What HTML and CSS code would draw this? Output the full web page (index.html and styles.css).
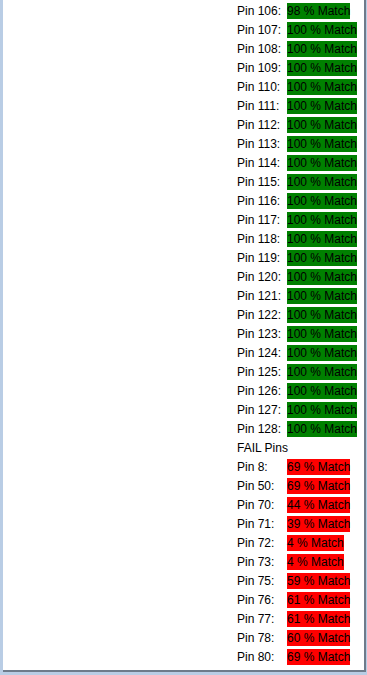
FILE: index.html
```html
<!DOCTYPE html>
<html>
<head>
  <title>Pin Results</title>
  <link rel="stylesheet" href="styles.css">
</head>
<body>
  <div class="panel">
    <div class="results">
      <span class="pin">Pin 106:</span><span><span class="match pass">98 % Match</span></span>
      <span class="pin">Pin 107:</span><span><span class="match pass">100 % Match</span></span>
      <span class="pin">Pin 108:</span><span><span class="match pass">100 % Match</span></span>
      <span class="pin">Pin 109:</span><span><span class="match pass">100 % Match</span></span>
      <span class="pin">Pin 110:</span><span><span class="match pass">100 % Match</span></span>
      <span class="pin">Pin 111:</span><span><span class="match pass">100 % Match</span></span>
      <span class="pin">Pin 112:</span><span><span class="match pass">100 % Match</span></span>
      <span class="pin">Pin 113:</span><span><span class="match pass">100 % Match</span></span>
      <span class="pin">Pin 114:</span><span><span class="match pass">100 % Match</span></span>
      <span class="pin">Pin 115:</span><span><span class="match pass">100 % Match</span></span>
      <span class="pin">Pin 116:</span><span><span class="match pass">100 % Match</span></span>
      <span class="pin">Pin 117:</span><span><span class="match pass">100 % Match</span></span>
      <span class="pin">Pin 118:</span><span><span class="match pass">100 % Match</span></span>
      <span class="pin">Pin 119:</span><span><span class="match pass">100 % Match</span></span>
      <span class="pin">Pin 120:</span><span><span class="match pass">100 % Match</span></span>
      <span class="pin">Pin 121:</span><span><span class="match pass">100 % Match</span></span>
      <span class="pin">Pin 122:</span><span><span class="match pass">100 % Match</span></span>
      <span class="pin">Pin 123:</span><span><span class="match pass">100 % Match</span></span>
      <span class="pin">Pin 124:</span><span><span class="match pass">100 % Match</span></span>
      <span class="pin">Pin 125:</span><span><span class="match pass">100 % Match</span></span>
      <span class="pin">Pin 126:</span><span><span class="match pass">100 % Match</span></span>
      <span class="pin">Pin 127:</span><span><span class="match pass">100 % Match</span></span>
      <span class="pin">Pin 128:</span><span><span class="match pass">100 % Match</span></span>
      <span class="heading">FAIL Pins</span>
      <span class="pin">Pin 8:</span><span><span class="match fail">69 % Match</span></span>
      <span class="pin">Pin 50:</span><span><span class="match fail">69 % Match</span></span>
      <span class="pin">Pin 70:</span><span><span class="match fail">44 % Match</span></span>
      <span class="pin">Pin 71:</span><span><span class="match fail">39 % Match</span></span>
      <span class="pin">Pin 72:</span><span><span class="match fail">4 % Match</span></span>
      <span class="pin">Pin 73:</span><span><span class="match fail">4 % Match</span></span>
      <span class="pin">Pin 75:</span><span><span class="match fail">59 % Match</span></span>
      <span class="pin">Pin 76:</span><span><span class="match fail">61 % Match</span></span>
      <span class="pin">Pin 77:</span><span><span class="match fail">61 % Match</span></span>
      <span class="pin">Pin 78:</span><span><span class="match fail">60 % Match</span></span>
      <span class="pin">Pin 80:</span><span><span class="match fail">69 % Match</span></span>
    </div>
  </div>
</body>
</html>
```

FILE: styles.css
```css
html, body {
  margin: 0;
  background: #b9cde5;
}

.panel {
  box-sizing: border-box;
  margin-left: 3px;
  width: 363px;
  height: 672px;
  background: #fff;
  border-right: 2px solid #6e7b8b;
  border-bottom: 2px solid #6e7b8b;
}

.results {
  display: grid;
  grid-template-columns: 50px auto;
  padding: 2px 0 0 234px;
  font-family: "Liberation Sans", Arial, sans-serif;
  font-size: 12px;
  line-height: 19px;
  color: #000;
}

.heading {
  grid-column: 1 / 3;
}

.match {
  padding: 1px 0;
}

.pass {
  background: #008000;
}

.fail {
  background: #ff0000;
}
```
